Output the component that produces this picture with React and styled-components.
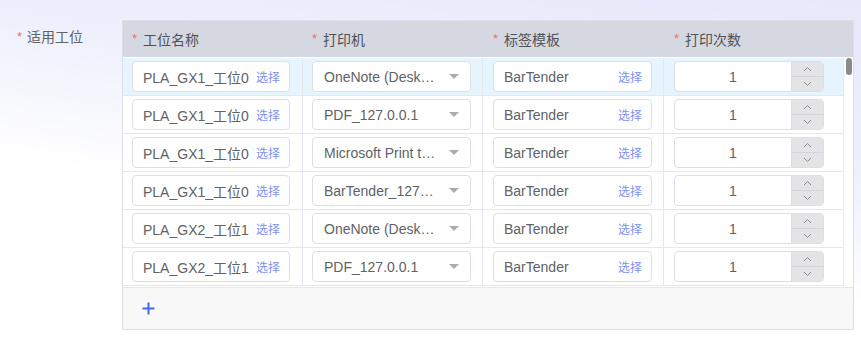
import React from "react";
import styled, { createGlobalStyle } from "styled-components";

const Global = createGlobalStyle`
  html, body { margin: 0; padding: 0; }
  body {
    width: 861px;
    height: 343px;
    overflow: hidden;
    font-family: "Liberation Sans", "Noto Sans CJK SC", sans-serif;
    background: linear-gradient(190deg, #e7e9fb 0%, #eef0fc 35%, #ffffff 62%);
  }
`;

const Page = styled.div`
  height: 343px;
  padding-top: 20px;
  box-sizing: border-box;
  display: flex;
  align-items: flex-start;
`;

const Label = styled.div`
  width: 122px;
  box-sizing: border-box;
  padding-left: 17px;
  padding-top: 7px;
  font-size: 14px;
  line-height: 20px;
  color: #606266;
  display: flex;
  gap: 5px;
  align-items: flex-start;
`;

const Star = styled.span`
  color: #f56c6c;
  font-size: 13px;
  line-height: 20px;
`;

const Table = styled.div`
  width: 732px;
  box-sizing: border-box;
  border: 1px solid #dcdfe6;
  background: #fff;
  display: flex;
  flex-direction: column;
`;

const cols = "180px 180px 181px 180px";

const HeaderRow = styled.div`
  display: grid;
  grid-template-columns: ${cols} 1fr;
  height: 36px;
  background: #d5d8e1;
`;

const HeadCell = styled.div`
  display: flex;
  align-items: center;
  gap: 6px;
  padding-left: ${(p) => p.$pl}px;
  font-size: 14px;
  color: #505257;
`;

const BodyArea = styled.div`
  display: grid;
  grid-template-columns: 721px 1fr;
  height: 230px;
  overflow: hidden;
`;

const Rows = styled.div`
  display: flex;
  flex-direction: column;
  padding-top: 1px;
`;

const ScrollTrack = styled.div`
  position: relative;
  background: #fff;
`;

const Thumb = styled.div`
  position: absolute;
  left: 2px;
  top: 1px;
  width: 6px;
  height: 17px;
  border-radius: 3px;
  background: #8b8b8b;
`;

const Row = styled.div`
  display: grid;
  grid-template-columns: ${cols};
  height: 38px;
  flex: none;
  box-sizing: border-box;
  border-bottom: 1px solid #e4e7ed;
  background: ${(p) => (p.$active ? "#e5f4fd" : "#fff")};
`;

const Cell = styled.div`
  box-sizing: border-box;
  border-right: 1px solid #e4e7ed;
  padding-left: ${(p) => p.$pl}px;
  padding-top: 3px;
`;

const Box = styled.div`
  width: ${(p) => p.$w}px;
  height: 31px;
  box-sizing: border-box;
  border: 1px solid #dcdfe6;
  border-radius: 4px;
  background: #fff;
  display: flex;
  align-items: center;
  position: relative;
  overflow: hidden;
`;

const Value = styled.span`
  flex: 1;
  min-width: 0;
  padding-left: 10px;
  font-size: 14px;
  color: #606266;
  white-space: nowrap;
  overflow: hidden;
  text-overflow: ellipsis;
`;

const Pick = styled.span`
  font-size: 12px;
  color: #7c92f1;
  padding-right: 9px;
  white-space: nowrap;
`;

const SelectValue = styled(Value)`
  padding-left: 11px;
  padding-right: 33px;
`;

const Caret = styled.span`
  position: absolute;
  right: 11px;
  top: 12px;
  width: 0;
  height: 0;
  border-left: 5px solid transparent;
  border-right: 5px solid transparent;
  border-top: 5px solid #a8abb2;
`;

const Num = styled.span`
  flex: 1;
  text-align: center;
  font-size: 14px;
  color: #606266;
`;

const Spinner = styled.div`
  width: 31px;
  height: 100%;
  border-left: 1px solid #dcdfe6;
  background: #e4e4e6;
  display: flex;
  flex-direction: column;
`;

const SpinBtn = styled.div`
  flex: 1;
  display: flex;
  align-items: center;
  justify-content: center;
  border-top: ${(p) => (p.$down ? "1px solid #d3d5da" : "none")};
`;

const Footer = styled.div`
  height: 41px;
  border-top: 1px solid #e4e7ed;
  background: #f8f8f9;
  display: flex;
  align-items: center;
  padding-left: 19px;
`;

const Chevron = ({ up }) => (
  <svg width="9" height="6" viewBox="0 0 9 6">
    <polyline
      points={up ? "1,5 4.5,1.5 8,5" : "1,1 4.5,4.5 8,1"}
      fill="none"
      stroke="#8a8c92"
      strokeWidth="1"
    />
  </svg>
);

const Plus = () => (
  <svg width="13" height="13" viewBox="0 0 13 13">
    <path d="M6.5 0.5v12M0.5 6.5h12" stroke="#4468f2" strokeWidth="2" />
  </svg>
);

const rows = [
  ["PLA_GX1_工位0", "OneNote (Desktop)"],
  ["PLA_GX1_工位0", "PDF_127.0.0.1"],
  ["PLA_GX1_工位0", "Microsoft Print to PDF"],
  ["PLA_GX1_工位0", "BarTender_127.0.0.1"],
  ["PLA_GX2_工位1", "OneNote (Desktop)"],
  ["PLA_GX2_工位1", "PDF_127.0.0.1"],
];

export default function App() {
  return (
    <>
      <Global />
      <Page>
        <Label>
          <Star>*</Star>
          <span>适用工位</span>
        </Label>
        <Table>
          <HeaderRow>
            <HeadCell $pl={9}><Star>*</Star>工位名称</HeadCell>
            <HeadCell $pl={9}><Star>*</Star>打印机</HeadCell>
            <HeadCell $pl={10}><Star>*</Star>标签模板</HeadCell>
            <HeadCell $pl={10}><Star>*</Star>打印次数</HeadCell>
            <div />
          </HeaderRow>
          <BodyArea>
            <Rows>
              {rows.map(([name, printer], i) => (
                <Row key={i} $active={i === 0}>
                  <Cell $pl={9}>
                    <Box $w={158}>
                      <Value>{name}</Value>
                      <Pick>选择</Pick>
                    </Box>
                  </Cell>
                  <Cell $pl={9}>
                    <Box $w={159}>
                      <SelectValue>{printer}</SelectValue>
                      <Caret />
                    </Box>
                  </Cell>
                  <Cell $pl={10}>
                    <Box $w={159}>
                      <Value>BarTender</Value>
                      <Pick>选择</Pick>
                    </Box>
                  </Cell>
                  <Cell $pl={10}>
                    <Box $w={150}>
                      <Num>1</Num>
                      <Spinner>
                        <SpinBtn><Chevron up /></SpinBtn>
                        <SpinBtn $down><Chevron /></SpinBtn>
                      </Spinner>
                    </Box>
                  </Cell>
                </Row>
              ))}
            </Rows>
            <ScrollTrack>
              <Thumb />
            </ScrollTrack>
          </BodyArea>
          <Footer>
            <Plus />
          </Footer>
        </Table>
      </Page>
    </>
  );
}
